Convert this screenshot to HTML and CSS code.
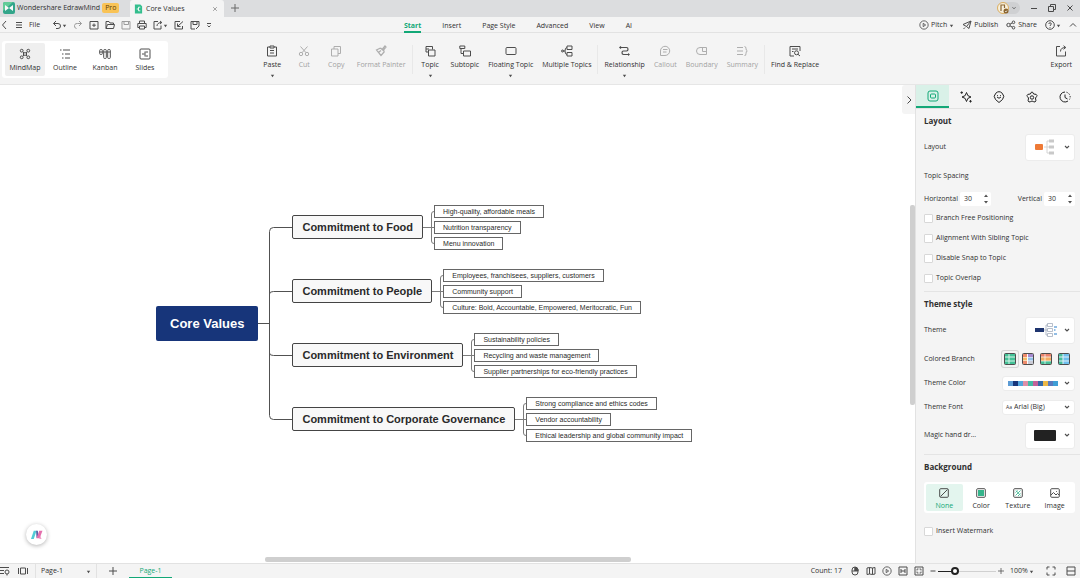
FILE: index.html
```html
<!DOCTYPE html>
<html lang="en">
  <head>
    <meta charset="UTF-8" />
    <meta name="viewport" content="width=device-width, initial-scale=1.0" />
    <title>Core Values - Wondershare EdrawMind</title>
    <link rel="stylesheet" href="styles.css">
  </head>
  <body>
    <svg class="sprite" aria-hidden="true">
      <symbol id="i-caret" viewBox="0 0 6 6"><path d="M1 2h4L3 5z" fill="currentColor" stroke="none"/></symbol>
      <symbol id="i-chevron" viewBox="0 0 8 8"><path d="M2 3l2 2 2-2" stroke-width="1.100"/></symbol>
      <symbol id="i-close" viewBox="0 0 8 8"><path d="M1.500 1.500l5 5M6.500 1.500l-5 5"/></symbol>
      <symbol id="i-plus" viewBox="0 0 8 8"><path d="M4 0v8M0 4h8"/></symbol>
      <symbol id="i-play" viewBox="0 0 12 12"><circle cx="6" cy="6" r="5"/><path d="M5 4l3 2-3 2z"/></symbol>
    </svg>

    <header class="titlebar">
      <div class="app-tab">
        <svg class="logo" viewBox="0 0 12 12"><rect width="12" height="12" rx="2" fill="#159c7c"/><path d="M0 2a2 2 0 0 1 2-2h8L0 9z" fill="#4cc98b"/><path d="M2 3l4 3 4-3v6L6 6 2 9z" fill="#fff"/></svg>
        <span>Wondershare EdrawMind</span>
        <span class="pro">Pro</span>
      </div>
      <div class="doc-tab">
        <svg class="doc-logo" viewBox="0 0 10 10"><path d="M1 0h6l2 2v8H1z" fill="#12b57c"/><path d="M3 5h2M7 3H5v4h2" fill="none" stroke="#fff"/></svg>
        <span>Core Values</span>
        <button class="tab-close" aria-label="Close tab"><svg class="i6"><use href="#i-close"/></svg></button>
      </div>
      <button class="new-tab" aria-label="New tab"><svg class="i8"><use href="#i-plus"/></svg></button>
      <div class="window-tools">
        <button class="account" aria-label="Account">
          <svg class="i12" viewBox="0 0 12 12"><circle cx="6" cy="6" r="5.500" fill="#fff6df" stroke="#dfa94c"/><path d="M4 9V3h3.500v3" stroke="#80551b" stroke-width="1.200"/><circle cx="9" cy="9" r="2.500" fill="#805314" stroke="none"/><path d="M8 9l1 1 1-1.500" stroke="#fff" stroke-width=".7"/></svg>
          <svg class="i6"><use href="#i-chevron"/></svg>
        </button>
        <button aria-label="Minimize"><svg class="i8" viewBox="0 0 8 8"><path d="M1 4.500h6"/></svg></button>
        <button aria-label="Restore"><svg class="i8" viewBox="0 0 8 8"><path d="M.5 2.500h5v5h-5zM2.500 2.500v-2h5v5h-2"/></svg></button>
        <button aria-label="Close"><svg class="i8"><use href="#i-close"/></svg></button>
      </div>
    </header>

    <div class="menubar">
      <div class="quick">
        <button aria-label="Back"><svg class="i8" viewBox="0 0 8 8"><path d="M5 0L1.500 4 5 8"/></svg></button>
        <button class="file"><svg class="i8" viewBox="0 0 8 8"><path d="M1 1.500h6M1 4h6M1 6.500h6"/></svg>File</button>
        <button class="undo" aria-label="Undo"><svg class="i10" viewBox="0 0 10 10"><path d="M4 1L1.500 3.500 4 6M1.500 3.500H6a2.500 2.500 0 0 1 0 5H4"/></svg><svg class="i5"><use href="#i-caret"/></svg></button>
        <button class="dim" aria-label="Redo"><svg class="i10" viewBox="0 0 10 10"><path d="M6 1l2.500 2.500L6 6M8.500 3.500H4.500a2.500 2.500 0 0 0-1 5"/></svg></button>
        <button aria-label="New"><svg class="i10" viewBox="0 0 10 10"><path d="M1 1.500h8v7.500H1zM5 3.500v3.500M3.200 5.200h3.600"/></svg></button>
        <button aria-label="Open"><svg class="i10" viewBox="0 0 10 10"><path d="M1 8.500v-7h3l1 1.500h3.500v1.500M1 8.500l1.500-4H9.500L8.500 8.500z"/></svg></button>
        <button class="dim" aria-label="Save"><svg class="i10" viewBox="0 0 10 10"><path d="M1 1.500h8v7.500H1zM3 1.500v3h4.500v-3"/></svg></button>
        <button aria-label="Print"><svg class="i10" viewBox="0 0 10 10"><path d="M2.500 3.500v-2.500h5v2.500M2.500 7.500H.8v-4h8.400v4H7.500M2.500 6h5v3h-5z"/></svg></button>
        <button aria-label="Export"><svg class="i10" viewBox="0 0 10 10"><path d="M5 1.500H1v7.500h7V5.500M4 6c0-2 1.500-3.500 4.500-3.500M7 1l1.800 1.500L7 4"/></svg><svg class="i5"><use href="#i-caret"/></svg></button>
        <button aria-label="Edit"><svg class="i10" viewBox="0 0 10 10"><path d="M6 1.500H1v7.500h7.500V6M9 1.500L4 6M3.500 3.500V6.500H6.500"/></svg></button>
        <button aria-label="Save as"><svg class="i10" viewBox="0 0 10 10"><path d="M1 1.500h8V6M5 9H1V1.500M3 1.500v3h4v-3M6 9l3-3"/></svg></button>
        <button aria-label="More"><svg class="i6" viewBox="0 0 6 6"><path d="M1 1.500h4M1.500 3.500L3 5l1.500-1.500"/></svg></button>
      </div>
      <nav class="menu-tabs">
        <a href="#" class="active">Start</a>
        <a href="#">Insert</a>
        <a href="#">Page Style</a>
        <a href="#">Advanced</a>
        <a href="#">View</a>
        <a href="#">AI</a>
      </nav>
      <div class="share-tools">
        <button><svg class="i10"><use href="#i-play"/></svg><span>Pitch</span><svg class="i5"><use href="#i-caret"/></svg></button>
        <button><svg class="i10" viewBox="0 0 10 10"><path d="M1 4.500L9 1 7 8.500 4.500 6.500zM4.500 6.500L9 1M1.500 9L3 7.500"/></svg><span>Publish</span></button>
        <button><svg class="i10" viewBox="0 0 10 10"><circle cx="2.500" cy="5" r="1.700"/><circle cx="7.500" cy="2.300" r="1.300"/><circle cx="7.500" cy="7.700" r="1.300"/><path d="M4 4.200l2.300-1.300M4 5.800l2.300 1.300"/></svg><span>Share</span></button>
        <button class="help" aria-label="Help"><svg class="i10" viewBox="0 0 10 10"><circle cx="5" cy="5" r="4.300"/><path d="M3.800 4c0-1.700 2.500-1.700 2.500 0 0 .8-1.300 1-1.300 2M5 7v.8"/></svg><svg class="i5"><use href="#i-caret"/></svg></button>
        <button aria-label="Collapse ribbon"><svg class="i8" viewBox="0 0 8 8"><path d="M1 5.500l3-3 3 3"/></svg></button>
      </div>
    </div>

    <div class="ribbon">
      <div class="views">
        <button class="active"><svg class="i12" viewBox="0 0 12 12"><path d="M4 4l4 4M8 4L4 8"/><circle cx="2.700" cy="2.700" r="1.400"/><circle cx="9.300" cy="2.700" r="1.400"/><circle cx="2.700" cy="9.300" r="1.400"/><circle cx="9.300" cy="9.300" r="1.400"/><rect x="4.500" y="4.800" width="3" height="2.400" fill="#efefef"/></svg>MindMap</button>
        <button><svg class="i12" viewBox="0 0 12 12"><path d="M1 2h1.500M4 2h7M3 6h1.500M6 6h5M3 10h1.500M6 10h5"/></svg>Outline</button>
        <button><svg class="i12" viewBox="0 0 12 12"><rect x=".7" y="1.500" width="2.600" height="5" rx="1"/><rect x="4.700" y="1.500" width="2.600" height="9" rx="1"/><rect x="8.700" y="1.500" width="2.600" height="9" rx="1"/><path d="M.7 4h2.600M4.700 4h2.600M8.700 4h2.600"/></svg>Kanban</button>
        <button><svg class="i12" viewBox="0 0 12 12"><rect x="1" y="1" width="10" height="10" rx="1"/><path d="M3 6h2.500M9 4H6.500M9 8H6.500M6 3.500v5"/></svg>Slides</button>
      </div>
      <div class="tools">
        <button><svg class="i12" viewBox="0 0 12 12"><path d="M4 2H1.500v9h9V2H8M4 1h4v2H4zM4 5.500h4M4 8h4"/></svg>Paste<svg class="i5 drop"><use href="#i-caret"/></svg></button>
        <button disabled><svg class="i12" viewBox="0 0 12 12"><circle cx="3" cy="9" r="1.700"/><circle cx="9" cy="9" r="1.700"/><path d="M4 7.700L9.500 1.500M8 7.700L2.500 1.500"/></svg>Cut</button>
        <button disabled><svg class="i12" viewBox="0 0 12 12"><path d="M1.500 4h6.500v7H1.500zM4 4V1.500h6.500v7H8"/></svg>Copy</button>
        <button disabled><svg class="i12" viewBox="0 0 12 12"><path d="M7.500 4L10 1l1 1-2.500 3M5.500 3l4 3.500M5.500 3L1.500 5l4.500 5.500 3.500-4M4 7l2-1.500" stroke-width="1.200"/></svg>Format Painter</button>
        <span class="sep"></span>
        <button><svg class="i12" viewBox="0 0 12 12"><path d="M4 7H2V1.500h6.500v3M4.500 5H11v6H4.500zM2 4h3"/></svg>Topic<svg class="i5 drop"><use href="#i-caret"/></svg></button>
        <button><svg class="i12" viewBox="0 0 12 12"><path d="M.8 1h5v2.500h-5zM4.500 6H11.500v5H4.500zM2 3.500V8.500h2.500"/></svg>Subtopic</button>
        <button><svg class="i12" viewBox="0 0 12 12"><rect x="1" y="2.500" width="10" height="7" rx="1"/></svg>Floating Topic<svg class="i5 drop"><use href="#i-caret"/></svg></button>
        <button><svg class="i12" viewBox="0 0 12 12"><path d="M6 1h5v3.500H6zM6 7.500h5V11H6zM6 2.500Q4 2.500 4 6t2 3.500M1.500 6H4"/><circle cx="1.500" cy="6" r="1"/></svg>Multiple Topics</button>
        <span class="sep"></span>
        <button><svg class="i12" viewBox="0 0 12 12"><path d="M1.500 2.500H7.500q1.500 0 1.500 1.700T7.500 6H4.500q-1.500 0-1.500 1.700t1.500 1.800h5" stroke-width="1.200"/><circle cx="1.500" cy="2.500" r=".8" fill="currentColor"/><path d="M9 8l2 1.500L9 11z" fill="currentColor" stroke="none"/></svg>Relationship<svg class="i5 drop"><use href="#i-caret"/></svg></button>
        <button disabled><svg class="i12" viewBox="0 0 12 12"><path d="M1.500 10.500V6A4.600 4.600 0 1 1 6 10.500zM4 4.500h4.500M4 7h3.500"/></svg>Callout</button>
        <button disabled><svg class="i12" viewBox="0 0 12 12"><path d="M4 2.500h6.500v7H4a3.500 3.500 0 0 1 0-7zM6.500 2.500v4h4"/></svg>Boundary</button>
        <button disabled><svg class="i12" viewBox="0 0 12 12"><path d="M1 2.500h6M1 6h6M1 9.500h6M8.500 1.500q1.500 0 1.500 2T11.300 6Q10 6 10 8.500t-1.500 2"/></svg>Summary</button>
        <span class="sep"></span>
        <button><svg class="i12" viewBox="0 0 12 12"><path d="M5 11H1V1.500h10V6M3 4h6M3 6.500h1.500"/><circle cx="7.500" cy="7.800" r="2"/><path d="M9 9.300l2 1.700"/></svg>Find &amp; Replace</button>
      </div>
      <div class="export">
        <button><svg class="i12" viewBox="0 0 12 12"><path d="M5 1.500H1.500v9.500h9V6.500M5.500 6.500q0-4 5-4M8.500.7l2.300 1.800-2.300 1.800"/></svg>Export</button>
      </div>
    </div>

    <main class="workspace">
      <section class="canvas">
        <div class="mindmap">
          <div class="root">Core Values</div>
          <svg class="trunk" viewBox="0 0 34 240">
            <path d="M0 120.500H11.500M34 24.500H15.500Q11.500 24.500 11.500 28.500V212.500Q11.500 216.500 15.500 216.500H34M34 88.500H15.500Q11.500 88.500 11.500 91M34 152.500H15.500Q11.500 152.500 11.500 150"/>
          </svg>
          <div class="branches">
            <div class="branch">
              <div class="topic">Commitment to Food</div>
              <svg class="link" viewBox="0 0 11 48"><path d="M0 24.500H11M11 8.500Q8.500 8.500 8.500 11V38Q8.500 40.500 11 40.500"/></svg>
              <ul class="leaves">
                <li>High-quality, affordable meals</li>
                <li>Nutrition transparency</li>
                <li>Menu innovation</li>
              </ul>
            </div>
            <div class="branch">
              <div class="topic">Commitment to People</div>
              <svg class="link" viewBox="0 0 11 48"><path d="M0 24.500H11M11 8.500Q8.500 8.500 8.500 11V38Q8.500 40.500 11 40.500"/></svg>
              <ul class="leaves">
                <li>Employees, franchisees, suppliers, customers</li>
                <li>Community support</li>
                <li>Culture: Bold, Accountable, Empowered, Meritocratic, Fun</li>
              </ul>
            </div>
            <div class="branch">
              <div class="topic">Commitment to Environment</div>
              <svg class="link" viewBox="0 0 11 48"><path d="M0 24.500H11M11 8.500Q8.500 8.500 8.500 11V38Q8.500 40.500 11 40.500"/></svg>
              <ul class="leaves">
                <li>Sustainability policies</li>
                <li>Recycling and waste management</li>
                <li>Supplier partnerships for eco-friendly practices</li>
              </ul>
            </div>
            <div class="branch">
              <div class="topic">Commitment to Corporate Governance</div>
              <svg class="link" viewBox="0 0 11 48"><path d="M0 24.500H11M11 8.500Q8.500 8.500 8.500 11V38Q8.500 40.500 11 40.500"/></svg>
              <ul class="leaves">
                <li>Strong compliance and ethics codes</li>
                <li>Vendor accountability</li>
                <li>Ethical leadership and global community impact</li>
              </ul>
            </div>
          </div>
        </div>
        <button class="ai-button" aria-label="AI assistant">
          <svg viewBox="0 0 14 12"><path d="M1 11L4 2h3L4 11z" fill="#35c3cf"/><path d="M6.500 2h2l.5 5-2 3z" fill="#3a4a9c"/><path d="M7 10l3-8h3.500l-3 8z" fill="#e0559e"/><path d="M11 7l1.500 4H10z" fill="#f08cc0"/></svg>
        </button>
        <button class="collapse" aria-label="Collapse panel"><svg class="i8" viewBox="0 0 8 8"><path d="M2.500.5L6 4 2.500 7.500"/></svg></button>
        <div class="scroll-v"></div>
        <div class="scroll-h"></div>
      </section>

      <aside class="panel">
        <div class="panel-tabs">
          <button class="active" aria-label="Format"><svg class="i12" viewBox="0 0 12 12"><rect x="1" y="1" width="10" height="10" rx="2"/><rect x="3.500" y="4" width="5" height="4" rx="1"/></svg></button>
          <button aria-label="AI"><svg class="i12" viewBox="0 0 12 12"><path d="M6.500 1.500Q7 5.500 11 6 7 6.500 6.500 10.500 6 6.500 2 6 6 5.500 6.500 1.500z"/><path d="M1.700.3v2.600M.4 1.600H3M10.500 9v2.600M9.200 10.300h2.600" stroke-width=".9"/></svg></button>
          <button aria-label="Mark"><svg class="i12" viewBox="0 0 12 12"><path d="M6 11.500L2.500 8.500a4.600 4.600 0 1 1 7 0z"/><path d="M4 6q2 2.500 4 0M4.500 4v.8M7.500 4v.8"/></svg></button>
          <button aria-label="Clipart"><svg class="i12" viewBox="0 0 12 12"><path d="M6 1q1 0 1.600 2 3.400 0 3.400 1.500 0 .8-1.500 2.500Q10.500 10.500 9 11q-1 0-3-1-2 1-3 1-1.500-.5-.5-4Q1 5.300 1 4.500 1 3 4.400 3 5 1 6 1z"/><circle cx="6" cy="6.500" r="1.700"/></svg></button>
          <button aria-label="History"><svg class="i12" viewBox="0 0 12 12"><path d="M9 10A5 5 0 1 1 6 1M6 3.500V6.500l2.500 1.500"/><path d="M7.500 1.200A5 5 0 0 1 10.500 8.500" stroke-dasharray="1.300 1.300"/></svg></button>
        </div>

        <section>
          <h2>Layout</h2>
          <div class="row tall">
            <span>Layout</span>
            <button class="picker" aria-label="Layout">
              <svg class="thumb" viewBox="0 0 24 16"><rect x="1" y="5" width="8" height="6" rx="1" fill="#ee7a36" stroke="none"/><path d="M10 8h6M16 2h-3v12h3" stroke="#d4d4d4"/><path d="M15 2h5M15 8h5M15 14h5" stroke="#c9c9c9" stroke-width="3"/></svg>
              <svg class="i8"><use href="#i-chevron"/></svg>
            </button>
          </div>
          <div class="row sub">Topic Spacing</div>
          <div class="row spacing">
            <label for="horizontal">Horizontal</label>
            <span class="spin"><input id="horizontal" type="number" value="30"><svg viewBox="0 0 6 12"><path d="M1 4h4L3 1.500zM1 8h4L3 10.500z"/></svg></span>
            <label for="vertical" class="push">Vertical</label>
            <span class="spin"><input id="vertical" type="number" value="30"><svg viewBox="0 0 6 12"><path d="M1 4h4L3 1.500zM1 8h4L3 10.500z"/></svg></span>
          </div>
          <label class="check"><input type="checkbox">Branch Free Positioning</label>
          <label class="check"><input type="checkbox">Alignment With Sibling Topic</label>
          <label class="check"><input type="checkbox">Disable Snap to Topic</label>
          <label class="check"><input type="checkbox">Topic Overlap</label>
        </section>

        <section>
          <h2>Theme style</h2>
          <div class="row tall">
            <span>Theme</span>
            <button class="picker" aria-label="Theme">
              <svg class="thumb" viewBox="0 0 24 16"><rect x="1" y="6" width="9" height="4" fill="#1f356f" stroke="none"/><path d="M10 8h4M14 3h-2v10h2" stroke="#9aa3b5" stroke-width=".7"/><path d="M13.500 1.500h5v3h-5zM13.500 6.500h5v3h-5zM13.500 11.500h5v3h-5z" fill="#fff" stroke="#9aa3b5" stroke-width=".7"/><path d="M20 5h3M20 8h1.500M20 12h3" stroke="#6fa8dc" stroke-width="1.500"/></svg>
              <svg class="i8"><use href="#i-chevron"/></svg>
            </button>
          </div>
          <div class="row colored">
            <span>Colored Branch</span>
            <div class="branch-styles">
              <button class="active" aria-label="Single colour"><svg class="i12" viewBox="0 0 12 12"><rect x=".5" y=".5" width="11" height="11" rx="1" fill="#25b986"/><path d="M1 4h10M1 8h10M5 1v10" stroke="#d5f5e8"/></svg></button>
              <button aria-label="Rainbow"><svg class="i12" viewBox="0 0 12 12"><rect x=".5" y=".5" width="11" height="11" rx="1" fill="#fff"/><path d="M1 1h4v3H1zM1 8h4v3H1z" fill="#ee7a55" stroke="none"/><path d="M1 4.500h4v3H1z" fill="#f4b04e" stroke="none"/><path d="M6 1h5v3H6z" fill="#9878c8" stroke="none"/><path d="M6 4.500h5v3H6z" fill="#82b8e8" stroke="none"/><path d="M6 8h5v3H6z" fill="#c4c5d0" stroke="none"/></svg></button>
              <button aria-label="Rows"><svg class="i12" viewBox="0 0 12 12"><rect x=".5" y=".5" width="11" height="11" rx="1" fill="#f4a04a"/><path d="M1 1h10v3H1z" fill="#e96f53" stroke="none"/><path d="M1 8h10v3H1z" fill="#2db889" stroke="none"/><path d="M1 4h10M1 8h10M5 1v10" stroke="#fff" stroke-width=".7"/></svg></button>
              <button aria-label="Columns"><svg class="i12" viewBox="0 0 12 12"><rect x=".5" y=".5" width="11" height="11" rx="1" fill="#58b6ec"/><path d="M1 1h4v10H1z" fill="#29b58d" stroke="none"/><path d="M1 4h10M1 8h10M5 1v10" stroke="#e0f2fb"/></svg></button>
            </div>
          </div>
          <div class="row">
            <span>Theme Color</span>
            <button class="picker wide" aria-label="Theme Color">
              <span class="swatches"><i class="c1"></i><i class="c2"></i><i class="c3"></i><i class="c4"></i><i class="c5"></i><i class="c6"></i><i class="c7"></i><i class="c8"></i><i class="c9"></i><i class="c10"></i></span>
              <svg class="i8"><use href="#i-chevron"/></svg>
            </button>
          </div>
          <div class="row">
            <label for="font">Theme Font</label>
            <span class="picker wide"><small>Aa</small><select id="font"><option>Arial (Big)</option></select><svg class="i8"><use href="#i-chevron"/></svg></span>
          </div>
          <div class="row tall">
            <span>Magic hand dr...</span>
            <button class="picker" aria-label="Magic hand drawn"><span class="ink"></span><svg class="i8"><use href="#i-chevron"/></svg></button>
          </div>
        </section>

        <section>
          <h2>Background</h2>
          <div class="backgrounds">
            <button class="active"><svg class="i10" viewBox="0 0 10 10"><rect x=".7" y=".7" width="8.600" height="8.600" rx="1"/><path d="M1.500 8.500l7-7"/></svg>None</button>
            <button><svg class="i10" viewBox="0 0 10 10"><rect x=".7" y=".7" width="8.600" height="8.600" rx="1"/><rect x="2" y="2" width="6" height="6" fill="#12a877" stroke="none"/></svg>Color</button>
            <button><svg class="i10" viewBox="0 0 10 10"><rect x=".7" y=".7" width="8.600" height="8.600" rx="1"/><path d="M2.500 4.500l2-2M2.500 7.500l5-5M5 8l2.500-2.500M3 2.500l4.500 5" stroke="#35b58c"/></svg>Texture</button>
            <button><svg class="i10" viewBox="0 0 10 10"><rect x=".7" y=".7" width="8.600" height="8.600" rx="1"/><path d="M1 7l2.500-2.500L6 7l1.500-1.500L9 7M6.500 3v.8"/></svg>Image</button>
          </div>
          <label class="check"><input type="checkbox">Insert Watermark</label>
        </section>
      </aside>
    </main>

    <footer class="statusbar">
      <button aria-label="Outline"><svg class="i10" viewBox="0 0 10 10"><path d="M0 1.500h9M0 4.500h4M0 7.500h4"/><circle cx="7" cy="6" r="2"/><path d="M7 8v1.500"/></svg></button>
      <button class="pages" aria-label="Pages"><svg class="i10" viewBox="0 0 10 10"><path d="M2.500 2h5v6h-5zM.5 2v6M9.500 2v6"/></svg></button>
      <div class="page-select"><select aria-label="Page"><option>Page-1</option></select><svg class="i5"><use href="#i-caret"/></svg></div>
      <button class="add-page" aria-label="Add page"><svg class="i8"><use href="#i-plus"/></svg></button>
      <a href="#" class="page-tab">Page-1</a>
      <div class="status-right">
        <span class="count">Count: 17</span>
        <button aria-label="Mouse"><svg class="i10" viewBox="0 0 10 10"><path d="M2 4a3 3 0 0 1 6 0v2a3 3 0 0 1-6 0zM5 1v4H2"/><path d="M5 1.500h1.500l1.500 2V5H5z" fill="currentColor"/></svg></button>
        <button aria-label="Map"><svg class="i10" viewBox="0 0 10 10"><path d="M1 2l2.500-.5L6.500 2 9 1.500V8l-2.500.5L3.500 8 1 8.500zM3.500 1.500V8M6.500 2v6.500"/></svg></button>
        <button aria-label="Play"><svg class="i10"><use href="#i-play"/></svg></button>
        <button aria-label="Fit page"><svg class="i10" viewBox="0 0 10 10"><path d="M1 1h8v8H1zM3 3v4M7 3v4M3 5h4"/></svg></button>
        <button aria-label="Fit"><svg class="i10" viewBox="0 0 10 10"><path d="M1 1h8v8H1z"/><path d="M3 4.500V3h1.500M5.500 3H7v1.500M7 5.500V7H5.500M4.500 7H3V5.500" stroke-width=".8"/></svg></button>
        <div class="zoom">
          <button aria-label="Zoom out"><svg class="i6" viewBox="0 0 6 6"><path d="M.5 3h5"/></svg></button>
          <input type="range" min="0" max="100" value="25" aria-label="Zoom">
          <button aria-label="Zoom in"><svg class="i6"><use href="#i-plus"/></svg></button>
        </div>
        <div class="zoom-select"><select aria-label="Zoom level"><option>100%</option></select><svg class="i5"><use href="#i-caret"/></svg></div>
        <button class="full" aria-label="Full screen"><svg class="i10" viewBox="0 0 10 10"><path d="M1 3.500V1h2.500M6.500 1H9v2.500M9 6.500V9H6.500M3.500 9H1V6.500"/></svg></button>
        <button aria-label="Split view"><svg class="i10" viewBox="0 0 10 10"><path d="M1 1h8v8H1zM1 5h8"/></svg></button>
      </div>
    </footer>
  </body>
</html>
```
FILE: styles.css
```css
* {
  box-sizing: border-box;
}
body {
  margin: 0;
  min-height: 100vh;
  display: flex;
  flex-direction: column;
  font-family: "Open Sans", "Noto Sans", sans-serif;
  font-size: 7px;
  line-height: 10px;
  color: #303030;
  background-color: #f4f4f4;
}
button {
  display: flex;
  align-items: center;
  padding: 0;
  border: none;
  background: none;
  font: inherit;
  color: inherit;
  white-space: nowrap;
  cursor: pointer;
}
select, input {
  font: inherit;
  color: inherit;
  border: none;
  background: none;
  margin: 0;
  padding: 0;
}
select {
  appearance: none;
}
a {
  color: inherit;
  text-decoration: none;
}
svg {
  flex: none;
  fill: none;
  stroke: currentColor;
  opacity: 0.85;
}
.sprite {
  display: none;
}
.i5 {
  width: 5px;
  height: 5px;
}
.i6 {
  width: 6px;
  height: 6px;
}
.i8 {
  width: 8px;
  height: 8px;
}
.i10 {
  width: 10px;
  height: 10px;
}
.i12 {
  width: 12px;
  height: 12px;
}

/* title bar */
.titlebar {
  display: flex;
  height: 17px;
  padding-bottom: 1px;
  background-color: #dcdddf;
}
.app-tab {
  display: flex;
  align-items: center;
  gap: 2px;
  width: 130px;
  padding-left: 3px;
}
.logo {
  width: 12px;
  height: 12px;
  stroke: none;
}
.pro {
  padding: 0 3px;
  border-radius: 2px;
  background-color: #f9c356;
  color: #5e3b06;
}
.doc-tab {
  display: flex;
  align-items: center;
  gap: 3px;
  width: 94px;
  height: 17px;
  padding: 0 6px 0 4px;
  border-radius: 3px 3px 0 0;
  background-color: #f4f4f4;
}
.doc-logo {
  width: 9px;
  height: 10px;
  stroke: none;
}
.tab-close {
  margin-left: auto;
  color: #777;
}
.new-tab {
  margin-left: 7px;
  color: #555;
}
.window-tools {
  display: flex;
  align-items: center;
  gap: 10px;
  margin-left: auto;
  padding-right: 6px;
}
.account {
  gap: 2px;
  padding-right: 3px;
  border-radius: 7px;
  background-color: #cfd0d2;
}

/* menu bar */
.menubar {
  display: grid;
  grid-template-columns: 1fr auto 1fr;
  height: 16px;
  border-bottom: 1px solid #e2e2e2;
}
.quick, .share-tools {
  display: flex;
  align-items: center;
}
.quick {
  gap: 6px;
  padding-left: 1px;
}
.quick .file {
  gap: 6px;
  margin-right: 6px;
}
.dim {
  color: #8d8d8d;
}
.menu-tabs {
  display: flex;
  gap: 21px;
  margin-right: 44px;
}
.menu-tabs a {
  line-height: 17px;
  height: 16px;
}
.menu-tabs .active {
  color: #12a877;
  font-weight: bold;
  border-bottom: 2px solid #12a877;
}
.share-tools {
  justify-content: flex-end;
  gap: 8px;
  padding-right: 3px;
}
.share-tools button {
  gap: 2px;
}
.share-tools .help {
  gap: 1px;
}

/* ribbon */
.ribbon {
  display: grid;
  grid-template-columns: 1fr auto 1fr;
  align-items: start;
  height: 52px;
  padding-top: 8px;
  border-bottom: 1px solid #e6e6e6;
}
.ribbon button {
  flex-direction: column;
  gap: 3px;
}
.views {
  display: flex;
  justify-self: start;
  margin-left: 2px;
  padding: 2px 3px;
  border-radius: 3px;
  background-color: #fff;
}
.views button {
  width: 40px;
  height: 33px;
  padding-top: 5px;
  border-radius: 2px;
}
.views .active {
  background-color: #efefef;
}
.tools {
  display: flex;
  gap: 9px;
  padding-top: 4px;
}
.tools button {
  min-width: 23px;
}
.tools button:disabled {
  color: #a2a2a2;
}
.tools .sep {
  width: 1px;
  height: 29px;
  margin: 0 -3px;
  background-color: #e8e8e8;
}
.export {
  justify-self: end;
  padding: 4px 8px 0 0;
}

/* canvas */
.workspace {
  flex: 1;
  display: flex;
}
.canvas {
  position: relative;
  flex: 1;
  display: flex;
  align-items: center;
  padding: 0 0 2px 156px;
  background-color: #fff;
  font-family: "Liberation Sans", Arial, sans-serif;
  color: #2a2a2a;
}
.mindmap, .branch {
  display: flex;
  align-items: center;
}
.root {
  padding: 0 14px;
  border-radius: 2px;
  background-color: #17357a;
  color: #fff;
  font-size: 13px;
  font-weight: bold;
  line-height: 35px;
}
.trunk {
  width: 34px;
  height: 240px;
  stroke: #333;
}
.branches {
  display: flex;
  flex-direction: column;
  gap: 16px;
}
.branch {
  height: 48px;
}
.topic {
  padding: 0 9px;
  border: 1px solid #444;
  border-radius: 2px;
  background-color: #f8f8f8;
  font-size: 11px;
  font-weight: bold;
  line-height: 22px;
}
.link {
  width: 11px;
  height: 48px;
  stroke: #666;
}
.leaves {
  display: flex;
  flex-direction: column;
  align-items: flex-start;
  gap: 3px;
  margin: 0;
  padding: 0;
  list-style: none;
}
.leaves li {
  padding: 0 8px;
  border: 1px solid #666;
  line-height: 11px;
}
.ai-button {
  position: absolute;
  left: 26px;
  bottom: 18px;
  justify-content: center;
  width: 21px;
  height: 21px;
  border-radius: 50%;
  background-color: #fff;
  box-shadow: 0 1px 4px rgba(0, 0, 0, 0.3);
}
.ai-button svg {
  width: 13px;
  height: 11px;
  stroke: none;
}
.collapse {
  position: absolute;
  top: 0;
  right: 0;
  justify-content: center;
  width: 13px;
  height: 29px;
  border-radius: 3px 0 0 3px;
  background-color: #f4f4f4;
}
.scroll-v, .scroll-h {
  position: absolute;
  border-radius: 2px;
  background-color: #cfcfcf;
}
.scroll-v {
  top: 25%;
  right: 0;
  width: 5px;
  height: 42%;
}
.scroll-h {
  left: 29%;
  bottom: 1px;
  width: 40%;
  height: 5px;
}

/* side panel */
.panel {
  width: 165px;
  border-left: 1px solid #e2e2e2;
}
.panel-tabs {
  display: flex;
  height: 24px;
  border-bottom: 1px solid #e2e2e2;
  overflow: hidden;
}
.panel-tabs button {
  flex: none;
  justify-content: center;
  width: 33px;
  color: #222;
}
.panel-tabs svg {
  opacity: 1;
}
.panel-tabs .active {
  background-color: #d9f1e8;
  color: #12a877;
  border-bottom: 2px solid #12a877;
}
.panel section {
  display: flex;
  flex-direction: column;
  gap: 4px;
  margin-left: 8px;
  padding: 4px 5px 5px 0;
}
.panel section + section {
  border-top: 1px solid #e4e4e4;
}
.panel h2 {
  margin: 0;
  font-size: 8px;
  line-height: 16px;
}
.row {
  display: flex;
  align-items: center;
  justify-content: space-between;
  height: 20px;
}
.row.tall {
  height: 28px;
}
.row.sub {
  height: 22px;
}
.row.spacing {
  justify-content: flex-start;
  gap: 2px;
  height: 15px;
}
.row.colored {
  height: 21px;
}
.push {
  margin-left: auto;
}
.spin {
  display: flex;
  align-items: center;
  width: 31px;
  height: 14px;
  padding: 0 2px 0 4px;
  border-radius: 2px;
  background-color: #fff;
}
.spin input {
  width: 19px;
  appearance: textfield;
}
.spin input::-webkit-inner-spin-button {
  display: none;
}
.spin svg {
  width: 6px;
  height: 12px;
  fill: #333;
  stroke: none;
}
.check {
  display: flex;
  align-items: center;
  gap: 3px;
  height: 16px;
}
.check input {
  appearance: none;
  width: 9px;
  height: 9px;
  border: 1px solid #d8d8d8;
  border-radius: 1px;
  background-color: #fff;
}
.picker {
  display: flex;
  align-items: center;
  justify-content: space-between;
  width: 50px;
  height: 27px;
  padding: 0 3px 0 8px;
  border: 1px solid #ececec;
  border-radius: 3px;
  background-color: #fff;
}
.picker.wide {
  width: 73px;
  height: 15px;
  padding-left: 3px;
}
.picker select {
  flex: 1;
  margin-left: 2px;
}
.picker small {
  font-size: 5px;
}
.thumb {
  width: 24px;
  height: 16px;
  opacity: 1;
}
.ink {
  width: 22px;
  height: 11px;
  border-radius: 1px;
  background-color: #222;
}
.branch-styles {
  display: flex;
  gap: 2px;
  margin-right: 3px;
}
.branch-styles button {
  justify-content: center;
  width: 16px;
  height: 16px;
  border-radius: 2px;
}
.branch-styles .active {
  box-shadow: 0 0 0 1px #d5d5d5;
}
.swatches {
  display: flex;
  margin-left: 2px;
}
.swatches i {
  width: 5px;
  height: 5px;
}
.c1 { background-color: #5b9bd5; }
.c2 { background-color: #17357a; }
.c3 { background-color: #52a5dc; }
.c4 { background-color: #de8fa8; }
.c5 { background-color: #45bba6; }
.c6 { background-color: #c2629a; }
.c7 { background-color: #356aa8; }
.c8 { background-color: #edb847; }
.c9 { background-color: #5b79bd; }
.c10 { background-color: #3e9ed6; }
.backgrounds {
  display: flex;
  height: 31px;
  margin: 3px 0 6px;
  padding: 2px;
  border-radius: 3px;
  background-color: #fff;
}
.backgrounds button {
  flex: 1;
  flex-direction: column;
  justify-content: flex-end;
  gap: 3px;
  border-radius: 2px;
}
.backgrounds .active {
  background-color: #e3f5ee;
  color: #12a877;
}
.backgrounds .active svg {
  color: #303030;
}

/* status bar */
.statusbar {
  display: flex;
  align-items: center;
  height: 15px;
  border-top: 1px solid #e2e2e2;
}
.pages {
  margin-left: 8px;
}
.page-select {
  display: flex;
  align-items: center;
  width: 62px;
  height: 14px;
  margin-left: 7px;
  padding: 0 5px;
  border: 1px solid #e2e2e2;
  border-width: 0 1px;
}
.page-select select {
  flex: 1;
}
.add-page {
  margin: 0 12px;
}
.page-tab {
  width: 43px;
  height: 14px;
  border-bottom: 1px solid #12a877;
  color: #12a877;
  line-height: 14px;
  text-align: center;
}
.status-right {
  display: flex;
  align-items: center;
  gap: 6px;
  margin-left: auto;
  padding-right: 4px;
}
.count {
  margin-right: 2px;
}
.zoom, .zoom-select {
  display: flex;
  align-items: center;
}
.zoom {
  gap: 2px;
}
.zoom input {
  appearance: none;
  width: 58px;
  height: 10px;
  background: linear-gradient(to right, #222 25%, #d0d0d0 25%) center / 100% 1px no-repeat;
}
.zoom input::-webkit-slider-thumb {
  appearance: none;
  width: 8px;
  height: 8px;
  border: 2px solid #222;
  border-radius: 50%;
  background-color: #fff;
}
.zoom-select select {
  width: 19px;
}
.full {
  margin: 0 4px 0 6px;
}
```
